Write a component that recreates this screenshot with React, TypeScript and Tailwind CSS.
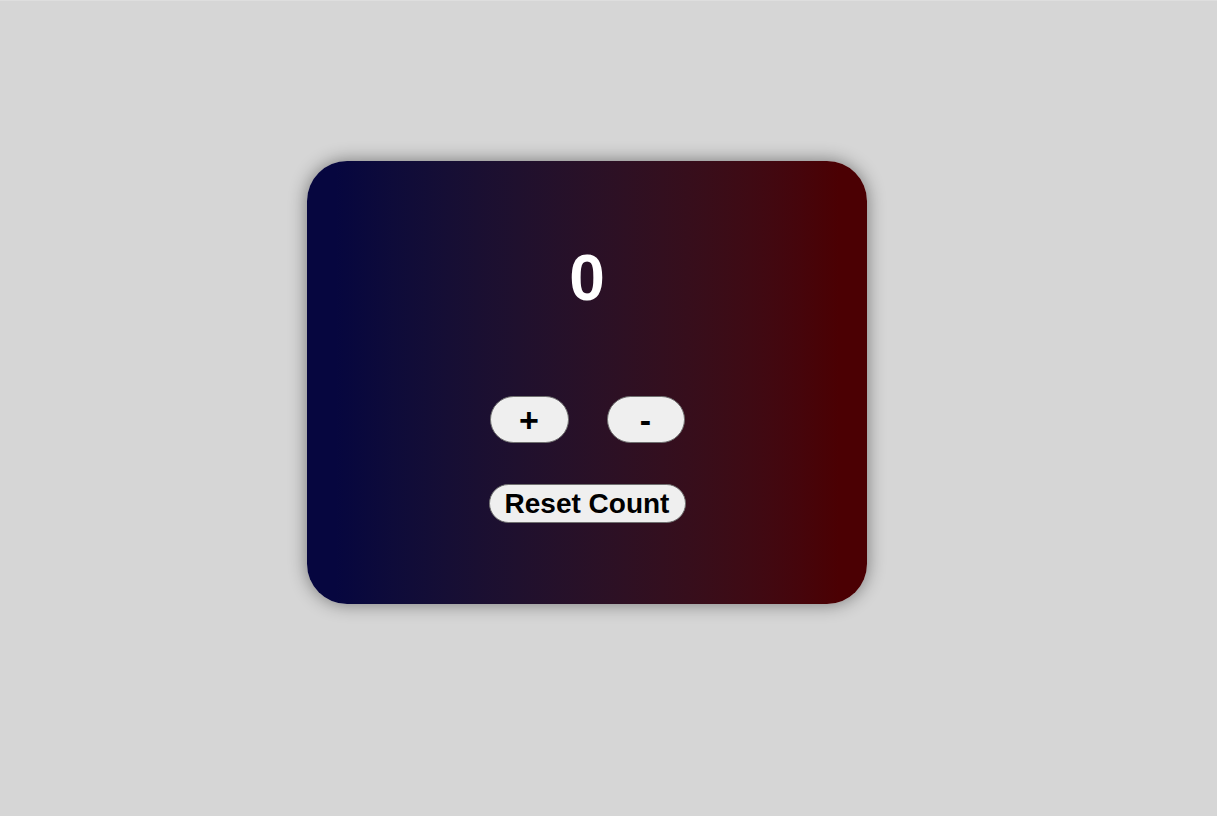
import { useState } from 'react'

export default function App() {
  const [count, setCount] = useState(0)

  return (
    <div className="min-h-[816px] w-full bg-[#d6d6d6] border-t border-[#dedede] pt-[160px] pl-[307px] font-['Liberation_Sans',Arial,sans-serif]">
      <div className="w-[560px] h-[443px] rounded-[40px] bg-linear-to-r from-[#06063f] from-5% to-[#4b0003] to-95% shadow-[0_0_18px_rgba(0,0,0,0.45)] flex flex-col items-center pt-[85px]">
        <h1 className="text-white font-bold text-[64px] leading-none">{count}</h1>

        <div className="flex gap-[38px] mt-[86px]">
          <button
            onClick={() => setCount(count + 1)}
            className="w-[79px] h-[47px] rounded-full bg-[#efefef] border border-[#6f6f6f] text-black font-bold text-[34px] leading-none flex items-center justify-center"
          >
            +
          </button>
          <button
            onClick={() => setCount(count - 1)}
            className="w-[78px] h-[47px] rounded-full bg-[#efefef] border border-[#6f6f6f] text-black font-bold text-[34px] leading-none flex items-center justify-center"
          >
            -
          </button>
        </div>

        <button
          onClick={() => setCount(0)}
          className="mt-[41px] w-[197px] h-[39px] rounded-full bg-[#efefef] border border-[#6f6f6f] text-black font-bold text-[28px] leading-none flex items-center justify-center"
        >
          Reset Count
        </button>
      </div>
    </div>
  )
}
